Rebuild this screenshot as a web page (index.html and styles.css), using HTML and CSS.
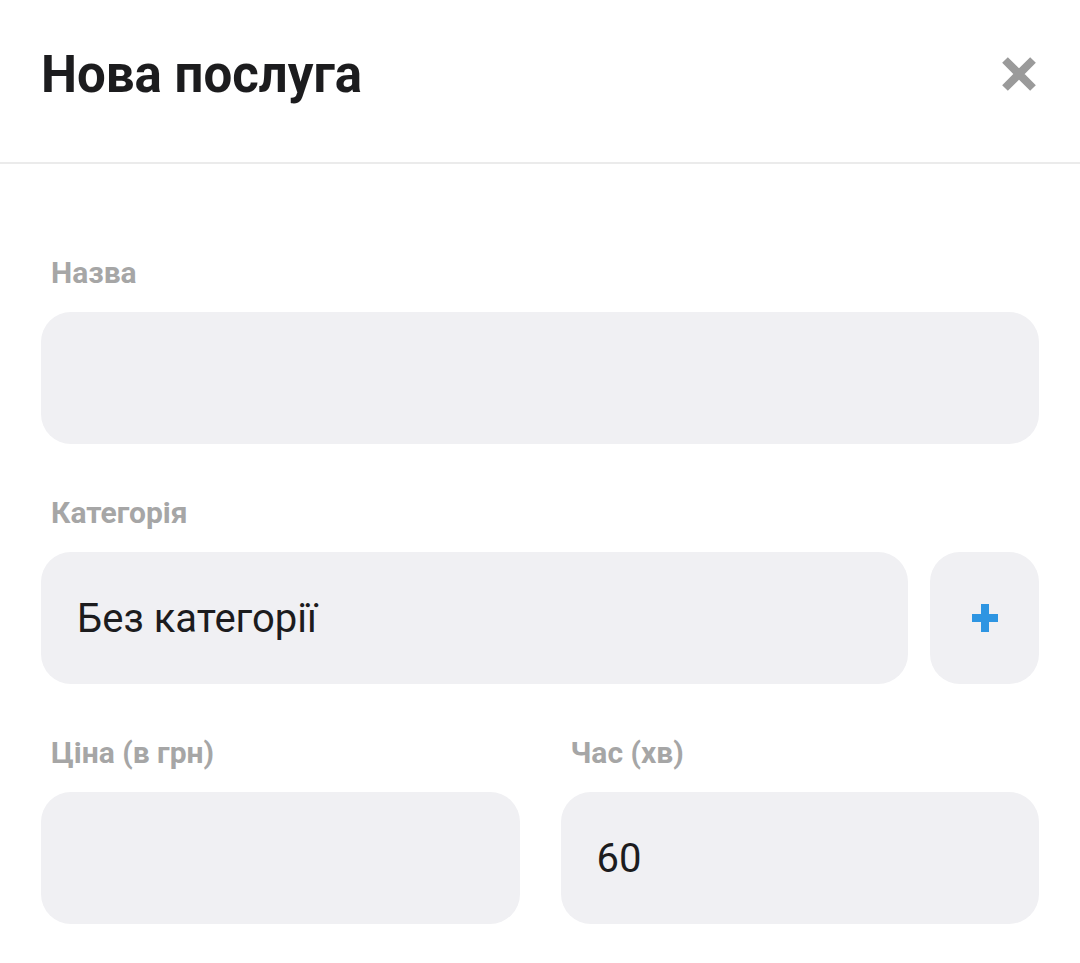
FILE: index.html
```html
<!DOCTYPE html>
<html lang="uk">
<head>
<meta charset="utf-8">
<link rel="stylesheet" href="styles.css">
</head>
<body>
<div class="sheet">
  <header class="header">
    <h1 class="title">Нова послуга</h1>
    <button class="close" aria-label="Закрити">
      <svg width="36" height="36" viewBox="0 0 36 36"><path d="M4 4 L32 32 M32 4 L4 32" stroke="#9a9a9a" stroke-width="8" stroke-linecap="butt"/></svg>
    </button>
  </header>
  <form class="form">
    <div class="field">
      <label class="label">Назва</label>
      <div class="input"></div>
    </div>
    <div class="field">
      <label class="label">Категорія</label>
      <div class="row">
        <div class="input grow"><span class="value">Без категорії</span></div>
        <div class="plus">
          <svg width="26" height="28" viewBox="0 0 26 28"><path d="M9 0h8v10h9v8h-9v10h-8v-10h-9v-8h9z" fill="#2e95e2"/></svg>
        </div>
      </div>
    </div>
    <div class="cols">
      <div class="field">
        <label class="label">Ціна (в грн)</label>
        <div class="input"></div>
      </div>
      <div class="field">
        <label class="label">Час (хв)</label>
        <div class="input"><span class="value">60</span></div>
      </div>
    </div>
  </form>
</div>
</body>
</html>
```
FILE: styles.css
```css
* { box-sizing: border-box; }
html, body { margin: 0; padding: 0; background: #ffffff; }
body { font-family: Roboto, "Noto Sans", sans-serif; color: #1c1c1e; }
.sheet { width: 1080px; height: 963px; overflow: hidden; }
.header {
  height: 164px;
  border-bottom: 2px solid #ebebeb;
  display: flex;
  align-items: center;
  justify-content: space-between;
  padding: 0 43px 14px 41px;
}
.title { margin: 0; font-size: 51px; font-weight: 700; color: #1c1c1e; letter-spacing: 0; }
.close { border: 0; background: none; padding: 0; width: 36px; height: 36px; display: flex; }
.form { padding: 92px 41px 0 41px; display: flex; flex-direction: column; gap: 52px; }
.field { display: flex; flex-direction: column; gap: 22px; }
.label { font-size: 30px; line-height: 34px; font-weight: 700; color: #a6a6a6; padding-left: 10px; }
.input {
  height: 132px;
  background: #f0f0f3;
  border-radius: 30px;
  display: flex;
  align-items: center;
  padding-left: 36px;
}
.value { font-size: 40px; color: #1c1c1e; }
.row { display: flex; gap: 22px; }
.grow { flex: 1; }
.plus {
  width: 109px;
  height: 132px;
  background: #f0f0f3;
  border-radius: 30px;
  display: flex;
  align-items: center;
  justify-content: center;
}
.cols { display: grid; grid-template-columns: 1fr 1fr; gap: 41px; }
```
